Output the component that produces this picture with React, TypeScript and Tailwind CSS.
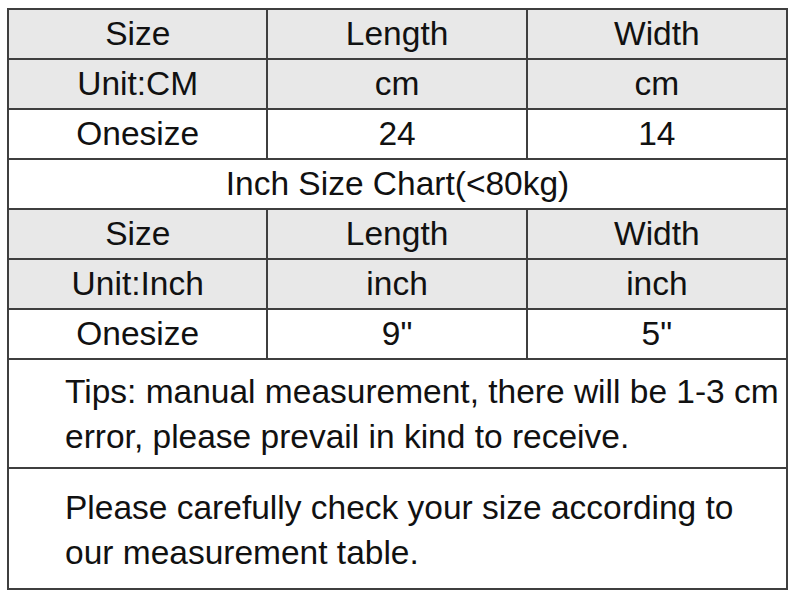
import React from "react";

const cell = "border-2 border-[#3f3f3f] text-center h-[50px] p-0 align-middle";

export default function App() {
  const grey = "bg-[#e8e8e8]";
  return (
    <div className="w-[800px] h-[595px] bg-white pt-[8px] pl-[7px]" style={{ fontFamily: '"Liberation Sans", Arial, sans-serif' }}>
      <table className="border-collapse text-[33.5px] text-[#111] leading-none w-[781px]">
        <colgroup>
          <col className="w-[260px]" />
          <col className="w-[260px]" />
          <col className="w-[261px]" />
        </colgroup>
        <tbody>
          <tr className={grey}>
            <td className={cell}>Size</td>
            <td className={cell}>Length</td>
            <td className={cell}>Width</td>
          </tr>
          <tr className={grey}>
            <td className={cell}>Unit:CM</td>
            <td className={cell}>cm</td>
            <td className={cell}>cm</td>
          </tr>
          <tr>
            <td className={cell}>Onesize</td>
            <td className={cell}>24</td>
            <td className={cell}>14</td>
          </tr>
          <tr>
            <td className={cell} colSpan={3}>Inch Size Chart(&lt;80kg)</td>
          </tr>
          <tr className={grey}>
            <td className={cell}>Size</td>
            <td className={cell}>Length</td>
            <td className={cell}>Width</td>
          </tr>
          <tr className={grey}>
            <td className={cell}>Unit:Inch</td>
            <td className={cell}>inch</td>
            <td className={cell}>inch</td>
          </tr>
          <tr>
            <td className={cell}>Onesize</td>
            <td className={cell}>9"</td>
            <td className={cell}>5"</td>
          </tr>
          <tr>
            <td className="border-2 border-[#3f3f3f] h-[109px] p-0 pl-[56px] text-left align-top pt-[9px] leading-[45px]" colSpan={3}>
              Tips: manual measurement, there will be 1-3 cm<br />error, please prevail in kind to receive.
            </td>
          </tr>
          <tr>
            <td className="border-2 border-[#3f3f3f] h-[121px] p-0 pl-[56px] text-left align-top pt-[16px] leading-[45px]" colSpan={3}>
              Please carefully check your size according to<br />our measurement table.
            </td>
          </tr>
        </tbody>
      </table>
    </div>
  );
}
